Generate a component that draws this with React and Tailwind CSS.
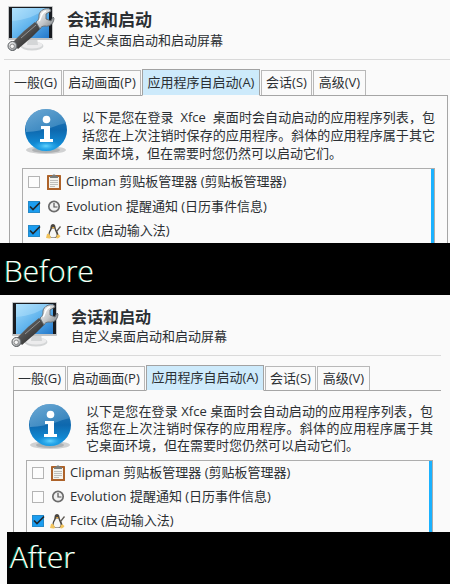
import React, { useState } from 'react';

const FONT = "font-['Open_Sans','Noto_Sans_CJK_SC',sans-serif]";

function MonitorIcon() {
  return (
    <svg className="block h-12 w-12 shrink-0" viewBox="0 0 48 48" aria-hidden="true">
      <defs>
        <linearGradient id="screen" x1="0" y1="0" x2="1" y2="1">
          <stop offset="0" stopColor="#a5dcfa" />
          <stop offset=".5" stopColor="#62b5ee" />
          <stop offset="1" stopColor="#2378cb" />
        </linearGradient>
        <linearGradient id="handle" x1="0" y1="0" x2="1" y2="1">
          <stop offset="0" stopColor="#858585" />
          <stop offset=".5" stopColor="#4a4a4a" />
          <stop offset="1" stopColor="#111" />
        </linearGradient>
        <linearGradient id="steel" x1="0" y1="0" x2="1" y2="1">
          <stop offset="0" stopColor="#fff" />
          <stop offset=".55" stopColor="#c3c6c8" />
          <stop offset="1" stopColor="#777c80" />
        </linearGradient>
      </defs>
      <ellipse cx="25" cy="42" rx="11.5" ry="4.5" fill="#d3d5d6" />
      <ellipse cx="25" cy="41" rx="10.5" ry="3.5" fill="#ececed" />
      <path d="M21 33h9l1 8H20z" fill="#d4d6d7" />
      <rect x="1" y="2" width="45" height="34" rx="1" fill="#c2c4c5" />
      <rect x="2" y="3" width="43" height="31" fill="#181b20" />
      <rect x="5" y="4" width="37" height="30" fill="url(#screen)" />
      <path d="M5 4h33C31 12 17 16 5 17z" fill="#c6eaff" opacity=".35" />
      <path d="m28 18 6 6-9 9-14 12-6-6 12-12z" fill="url(#handle)" />
      <path d="M14 34 29 21" stroke="#939393" strokeWidth="1" />
      <circle cx="5.500" cy="42" r="4.500" fill="url(#steel)" stroke="#54585b" />
      <circle cx="5.200" cy="42.300" r="2.200" fill="#f7f7f7" stroke="#777" strokeWidth=".8" />
      <path d="M29 18c3-2 3-4 3-7 1-5 6-7 11-6l1 2-5 3v5l5 2 2-4 1 1c0 6-5 9-9 8-3 0-4 1-5 3z" fill="url(#steel)" stroke="#676c70" strokeWidth=".9" />
      <path d="M32 17c3-3 1-8 7-10" stroke="#fff" strokeWidth="1.500" fill="none" />
    </svg>
  );
}

function InfoIcon() {
  return (
    <svg className="block h-12 w-[42px] shrink-0" viewBox="0 0 42 48" aria-hidden="true">
      <defs>
        <linearGradient id="ball" x1="0" y1="0" x2="0" y2="1">
          <stop offset="0" stopColor="#2f7ab5" />
          <stop offset=".5" stopColor="#0e68ae" />
          <stop offset="1" stopColor="#139be7" />
        </linearGradient>
        <linearGradient id="gloss" x1="0" y1="0" x2="1" y2="1">
          <stop offset="0" stopColor="#82b9df" />
          <stop offset="1" stopColor="#3584bd" />
        </linearGradient>
        <radialGradient id="glow">
          <stop offset="0" stopColor="#65d5ff" />
          <stop offset="1" stopColor="#1b9fe9" stopOpacity="0" />
        </radialGradient>
      </defs>
      <ellipse cx="21" cy="42" rx="20" ry="4" fill="#d0d1d2" />
      <ellipse cx="21" cy="42" rx="14" ry="3" fill="#aeb1b3" />
      <circle cx="21" cy="22" r="21" fill="url(#ball)" />
      <path d="M1 24C-1 10 10 1 21 1c10 0 17 6 20 14-10 2-19 8-40 9z" fill="url(#gloss)" opacity=".75" />
      <ellipse cx="21" cy="38" rx="14" ry="6" fill="url(#glow)" />
      <circle cx="21.500" cy="11.500" r="3.800" fill="#fff" />
      <path d="M16 18h9v13h3v3H15v-3h4V21h-3z" fill="#fff" />
    </svg>
  );
}

function ClipboardIcon() {
  return (
    <svg className="block h-4 w-4 shrink-0" viewBox="0 0 16 16" aria-hidden="true">
      <rect x="1" y="1" width="14" height="15" rx=".5" fill="#ad6229" />
      <rect x="3" y="3" width="10" height="11" fill="#f3f3ee" />
      <path d="M4 6.500h8M4 8.500h8M4 10.500h8M4 12.500h5" stroke="#b0b0ac" strokeWidth=".8" />
      <path d="M4 4V2h2c0-2 4-2 4 0h2v2z" fill="#797d7b" />
    </svg>
  );
}

function ClockIcon() {
  return (
    <svg className="block h-4 w-4 shrink-0" viewBox="0 0 16 16" aria-hidden="true">
      <circle cx="8" cy="7.500" r="5.200" fill="#f1f1f1" stroke="#6b6b6b" strokeWidth="1.700" />
      <path d="M8 4v4h3.500" fill="none" stroke="#555" strokeWidth="1.200" />
    </svg>
  );
}

function PenguinIcon() {
  return (
    <svg className="block h-4 w-4 shrink-0" viewBox="0 0 16 16" aria-hidden="true">
      <path d="M4.500 4c0-4 5-4 5 0 0 3 3 5 3 8 0 2-2 3-5 3s-6-1-5-4c0-3 2-4 2-7z" fill="#4b4742" />
      <path d="M6 5.500c-1 3-3 4-2 7.500 1 2 5 2 6.500 0 .500-3-1.500-4-2-7.500z" fill="#f7f7f5" />
      <path d="M1 11c2-1 3 1 4 3.500 0 1.500-3 1-5 .500zM11 12c2-1 2 0 3.500 1-1 2-3 3-4.500 2z" fill="#f2c45d" />
      <path d="M6 4h2.500L7 6z" fill="#e9a83a" />
      <path d="m10 8 4-5 1 1-4 5z" fill="#5f5a55" />
    </svg>
  );
}

const ENTRIES = [
  { id: 'clipman', label: 'Clipman 剪贴板管理器 (剪贴板管理器)', Icon: ClipboardIcon },
  { id: 'evolution', label: 'Evolution 提醒通知 (日历事件信息)', Icon: ClockIcon },
  { id: 'fcitx', label: 'Fcitx (启动输入法)', Icon: PenguinIcon },
];

const TABS = [
  { label: '一般(G)', width: 'w-[53px]' },
  { label: '启动画面(P)', width: 'w-[78px]' },
  { label: '应用程序自启动(A)', width: 'w-[118px]' },
  { label: '会话(S)', width: 'w-[51px]' },
  { label: '高级(V)', width: 'w-[53px]' },
];

const BEFORE = {
  id: 'before',
  header: 'pt-1 pl-[7px] h-[59px]',
  heading: 'pt-1 pl-3',
  title: 'text-[17px] leading-6',
  subtitle: 'leading-4',
  rule: 'ml-1',
  tabs: 'ml-[9px] mt-[9px]',
  tab: 'h-[25px]',
  activeTab: 'h-[27px]',
  panel: 'ml-[9px] mr-[2px] border-r',
  intro: 'pl-[15px] pr-3 pt-3 h-[72px]',
  text: 'pl-[15px] leading-[18px]',
  list: 'ml-3 mr-3',
  row: 'h-[25px] last:h-6',
  checked: ['evolution', 'fcitx'],
  lines: [
    '以下是您在登录  Xfce  桌面时会自动启动的应用程序列表，包',
    '括您在上次注销时保存的应用程序。斜体的应用程序属于其它',
    '桌面环境，但在需要时您仍然可以启动它们。',
  ],
};

const AFTER = {
  id: 'after',
  header: 'pt-[5px] pl-[11px] h-[60px]',
  heading: 'pt-[6px] pl-3',
  title: 'text-base leading-[22px]',
  subtitle: 'leading-4',
  rule: 'ml-[10px] mr-[9px]',
  tabs: 'ml-[13px] mt-[9px]',
  tab: 'h-6',
  activeTab: 'h-[26px]',
  panel: 'ml-[13px] mr-[9px]',
  intro: 'pl-[15px] pr-2 pt-3 h-[69px]',
  text: 'pl-[15px] leading-[17px]',
  list: 'ml-3 mr-2',
  row: 'h-6 last:h-[23px]',
  checked: ['fcitx'],
  lines: [
    '以下是您在登录 Xfce 桌面时会自动启动的应用程序列表，包',
    '括您在上次注销时保存的应用程序。斜体的应用程序属于其',
    '它桌面环境，但在需要时您仍然可以启动它们。',
  ],
};

function Entry({ id, label, Icon, defaultChecked, row }) {
  const [checked, setChecked] = useState(defaultChecked);
  return (
    <li className={`flex items-center pl-[5px] ${row}`}>
      <span className="relative block h-3 w-3 shrink-0">
        <input
          id={id}
          type="checkbox"
          checked={checked}
          onChange={(e) => setChecked(e.target.checked)}
          className="block h-3 w-3 appearance-none border border-[#b4b4b4] bg-[#fcfcfc] checked:border-[#2589c8] checked:bg-[#1b9df0]"
        />
        {checked && (
          <svg className="pointer-events-none absolute inset-0 h-3 w-3 overflow-visible" viewBox="0 0 12 12" aria-hidden="true">
            <path d="m2 5.500 3 3 7-7" fill="none" stroke="#20282f" strokeWidth="1.700" />
          </svg>
        )}
      </span>
      <label htmlFor={id} className="flex items-center gap-1 whitespace-nowrap pl-[6px]">
        <Icon />
        {label}
      </label>
    </li>
  );
}

function SessionSettings({ v }) {
  const [active, setActive] = useState(2);
  return (
    <section className="bg-[#fafafa]">
      <header className={`flex items-start ${v.header}`}>
        <MonitorIcon />
        <div className={v.heading}>
          <h1 className={`font-bold ${v.title}`}>会话和启动</h1>
          <p className={v.subtitle}>自定义桌面启动和启动屏幕</p>
        </div>
      </header>
      <div className={`h-px bg-[#dadada] ${v.rule}`} />
      <div role="tablist" className={`flex items-end gap-px ${v.tabs}`}>
        {TABS.map((t, i) => (
          <button
            key={t.label}
            type="button"
            role="tab"
            aria-selected={i === active}
            onClick={() => setActive(i)}
            className={`shrink-0 whitespace-nowrap border-x border-t text-center ${t.width} ${
              i === active
                ? `relative -mb-px border-[#a2a2a2] border-b border-b-[#fafafa] bg-[#cdeafb] ${v.activeTab}`
                : `border-[#b8b8b8] ${v.tab}`
            }`}
          >
            {t.label}
          </button>
        ))}
      </div>
      <div role="tabpanel" className={`border-l border-t border-[#a5a5a5] ${v.panel}`}>
        <div className={`flex items-start ${v.intro}`}>
          <InfoIcon />
          <p className={`min-w-0 flex-1 ${v.text}`}>
            {v.lines.map((line, i) => (
              <span
                key={line}
                className={`block whitespace-pre-wrap ${i < 2 ? '[text-align-last:justify]' : ''}`}
              >
                {line}
              </span>
            ))}
          </p>
        </div>
        <div className={`flex border-x border-t border-[#adadad] ${v.list}`}>
          <ul className="flex-1">
            {ENTRIES.map((e) => (
              <Entry
                key={e.id}
                id={`${v.id}-${e.id}`}
                label={e.label}
                Icon={e.Icon}
                row={v.row}
                defaultChecked={v.checked.includes(e.id)}
              />
            ))}
          </ul>
          <span className="w-[3px] bg-[#1ab2ff]" />
        </div>
      </div>
    </section>
  );
}

function Caption({ children, className }) {
  return (
    <h2
      className={`h-[52px] bg-black font-['Open_Sans','Noto_Sans',sans-serif] text-3xl font-light text-white [text-shadow:-1px_0_#00ff6680] ${className}`}
    >
      {children}
    </h2>
  );
}

export default function App() {
  return (
    <main className={`bg-[#fafafa] text-[13px] text-[#2b2f33] ${FONT}`}>
      <SessionSettings v={BEFORE} />
      <Caption className="pl-1 leading-[56px]">Before</Caption>
      <SessionSettings v={AFTER} />
      <Caption className="ml-[7px] pl-[3px] leading-[50px]">After</Caption>
    </main>
  );
}
